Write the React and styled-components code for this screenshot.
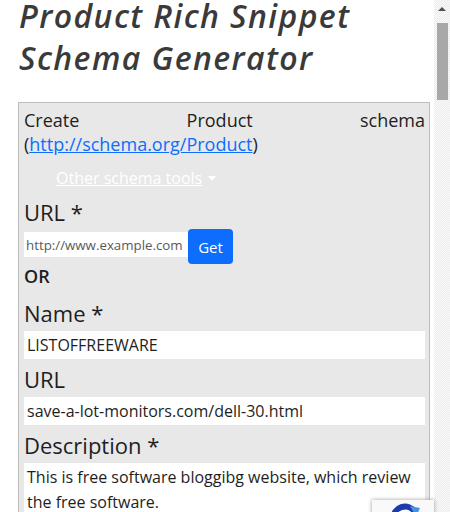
import React from "react";
import styled, { createGlobalStyle } from "styled-components";

const GlobalStyle = createGlobalStyle`
  html, body {
    margin: 0;
    padding: 0;
    background: #fff;
    overflow: hidden;
  }

  body {
    font-family: "Open Sans", "Noto Sans", sans-serif;
    color: #212529;
  }
`;

const App = () => {
  return (
    <Page>
      <GlobalStyle />
      <Main>
        <Title>
          Product Rich Snippet
          <br />
          Schema Generator
        </Title>
        <Panel>
          <Intro>
            Create Product schema (<a href="#product">http://schema.org/Product</a>)
          </Intro>
          <ToolsToggle href="#tools">Other schema tools</ToolsToggle>
          <Label>URL *</Label>
          <FetchRow>
            <FetchInput placeholder="http://www.example.com" />
            <GetButton type="button">Get</GetButton>
          </FetchRow>
          <Or>OR</Or>
          <Label>Name *</Label>
          <Field defaultValue="LISTOFFREEWARE" />
          <Label>URL</Label>
          <Field defaultValue="save-a-lot-monitors.com/dell-30.html" />
          <Label>Description *</Label>
          <TextArea
            rows={4}
            defaultValue="This is free software bloggibg website, which review the free software."
          />
        </Panel>
      </Main>
      <Scrollbar>
        <ArrowUp />
        <Thumb />
      </Scrollbar>
      <Badge>
        <svg width="34" height="34" viewBox="0 0 34 34">
          <path
            d="M5 17 A12 12 0 0 1 27 10"
            stroke="#1c3aa9"
            strokeWidth="6"
            fill="none"
          />
          <path d="M22 4 L32 6 L28 15 Z" fill="#4a90e2" />
        </svg>
      </Badge>
    </Page>
  );
};

const Page = styled.div`
  display: flex;
  height: 100vh;
  overflow: hidden;
`;

const Main = styled.main`
  flex: 1;
  padding: 0 4px 0 18px;
`;

const Title = styled.h1`
  margin: -5px 0 0 1px;
  font-size: 32px;
  line-height: 42px;
  letter-spacing: 1.4px;
  font-style: italic;
  font-weight: 600;
  color: #3a3a3a;
  white-space: nowrap;
`;

const Panel = styled.section`
  margin-top: 23px;
  padding: 5px 4px 0 5px;
  border: 1px solid #bdbdbd;
  border-bottom: none;
  background: #e8e8e8;
`;

const Intro = styled.p`
  margin: 0;
  font-size: 18px;
  line-height: 24px;
  text-align: justify;
  color: #1e1e1e;

  a {
    color: #0d6efd;
    text-decoration: underline;
  }
`;

const ToolsToggle = styled.a`
  display: block;
  width: max-content;
  margin: 10px 0 9px 32px;
  font-size: 16px;
  line-height: 24px;
  color: #fff;
  text-decoration: underline;

  &::after {
    content: "";
    display: inline-block;
    margin-left: 6px;
    vertical-align: 3px;
    border-top: 5px solid #fff;
    border-left: 4px solid transparent;
    border-right: 4px solid transparent;
  }
`;

const Label = styled.label`
  display: block;
  margin: 7px 0 5px;
  font-size: 22px;
  line-height: 26px;
  color: #1e1e1e;
`;

const FetchRow = styled.div`
  display: flex;
  align-items: flex-start;
  margin-top: -1px;
`;

const FetchInput = styled.input`
  box-sizing: border-box;
  width: 164px;
  height: 25px;
  margin-top: 3px;
  padding: 0 2px;
  border: none;
  background: #fff;
  font-family: "Open Sans", "Noto Sans", sans-serif;
  font-size: 13.3px;
  outline: none;

  &::placeholder {
    color: #5a5a5a;
  }
`;

const GetButton = styled.button`
  width: 45px;
  height: 35px;
  border: none;
  border-radius: 4px;
  background: #0d6efd;
  color: #fff;
  font-family: "Open Sans", "Noto Sans", sans-serif;
  font-size: 15px;
`;

const Or = styled.div`
  margin-bottom: 12px;
  font-size: 18px;
  line-height: 24px;
  font-weight: 600;
  color: #1e1e1e;
`;

const Field = styled.input`
  display: block;
  box-sizing: border-box;
  width: 100%;
  height: 28px;
  padding: 0 3px;
  border: none;
  background: #fff;
  font-family: "Open Sans", "Noto Sans", sans-serif;
  font-size: 16px;
  color: #1e1e1e;
  outline: none;
`;

const TextArea = styled.textarea`
  display: block;
  box-sizing: border-box;
  width: 100%;
  padding: 2px 3px;
  border: none;
  background: #fff;
  font-family: "Open Sans", "Noto Sans", sans-serif;
  font-size: 16px;
  line-height: 25px;
  color: #1e1e1e;
  resize: none;
  overflow: hidden;
  outline: none;
`;

const Scrollbar = styled.div`
  position: relative;
  flex: 0 0 16px;
  height: 100vh;
  background: repeating-conic-gradient(#ececec 0 25%, #fafafa 0 50%) 0 0 / 2px 2px;
`;

const ArrowUp = styled.div`
  width: 0;
  height: 0;
  margin: 7px auto 0;
  border-bottom: 4px solid #505050;
  border-left: 4px solid transparent;
  border-right: 4px solid transparent;
`;

const Thumb = styled.div`
  width: 11px;
  height: 77px;
  margin: 12px 0 0 3px;
  background: #a8a8a8;
`;

const Badge = styled.div`
  position: fixed;
  right: 16px;
  top: 500px;
  width: 62px;
  height: 60px;
  background: #f9f9f9;
  box-shadow: 0 0 4px #9a9a9a;

  svg {
    display: block;
    margin: 2px 0 0 16px;
  }
`;

export default App;
